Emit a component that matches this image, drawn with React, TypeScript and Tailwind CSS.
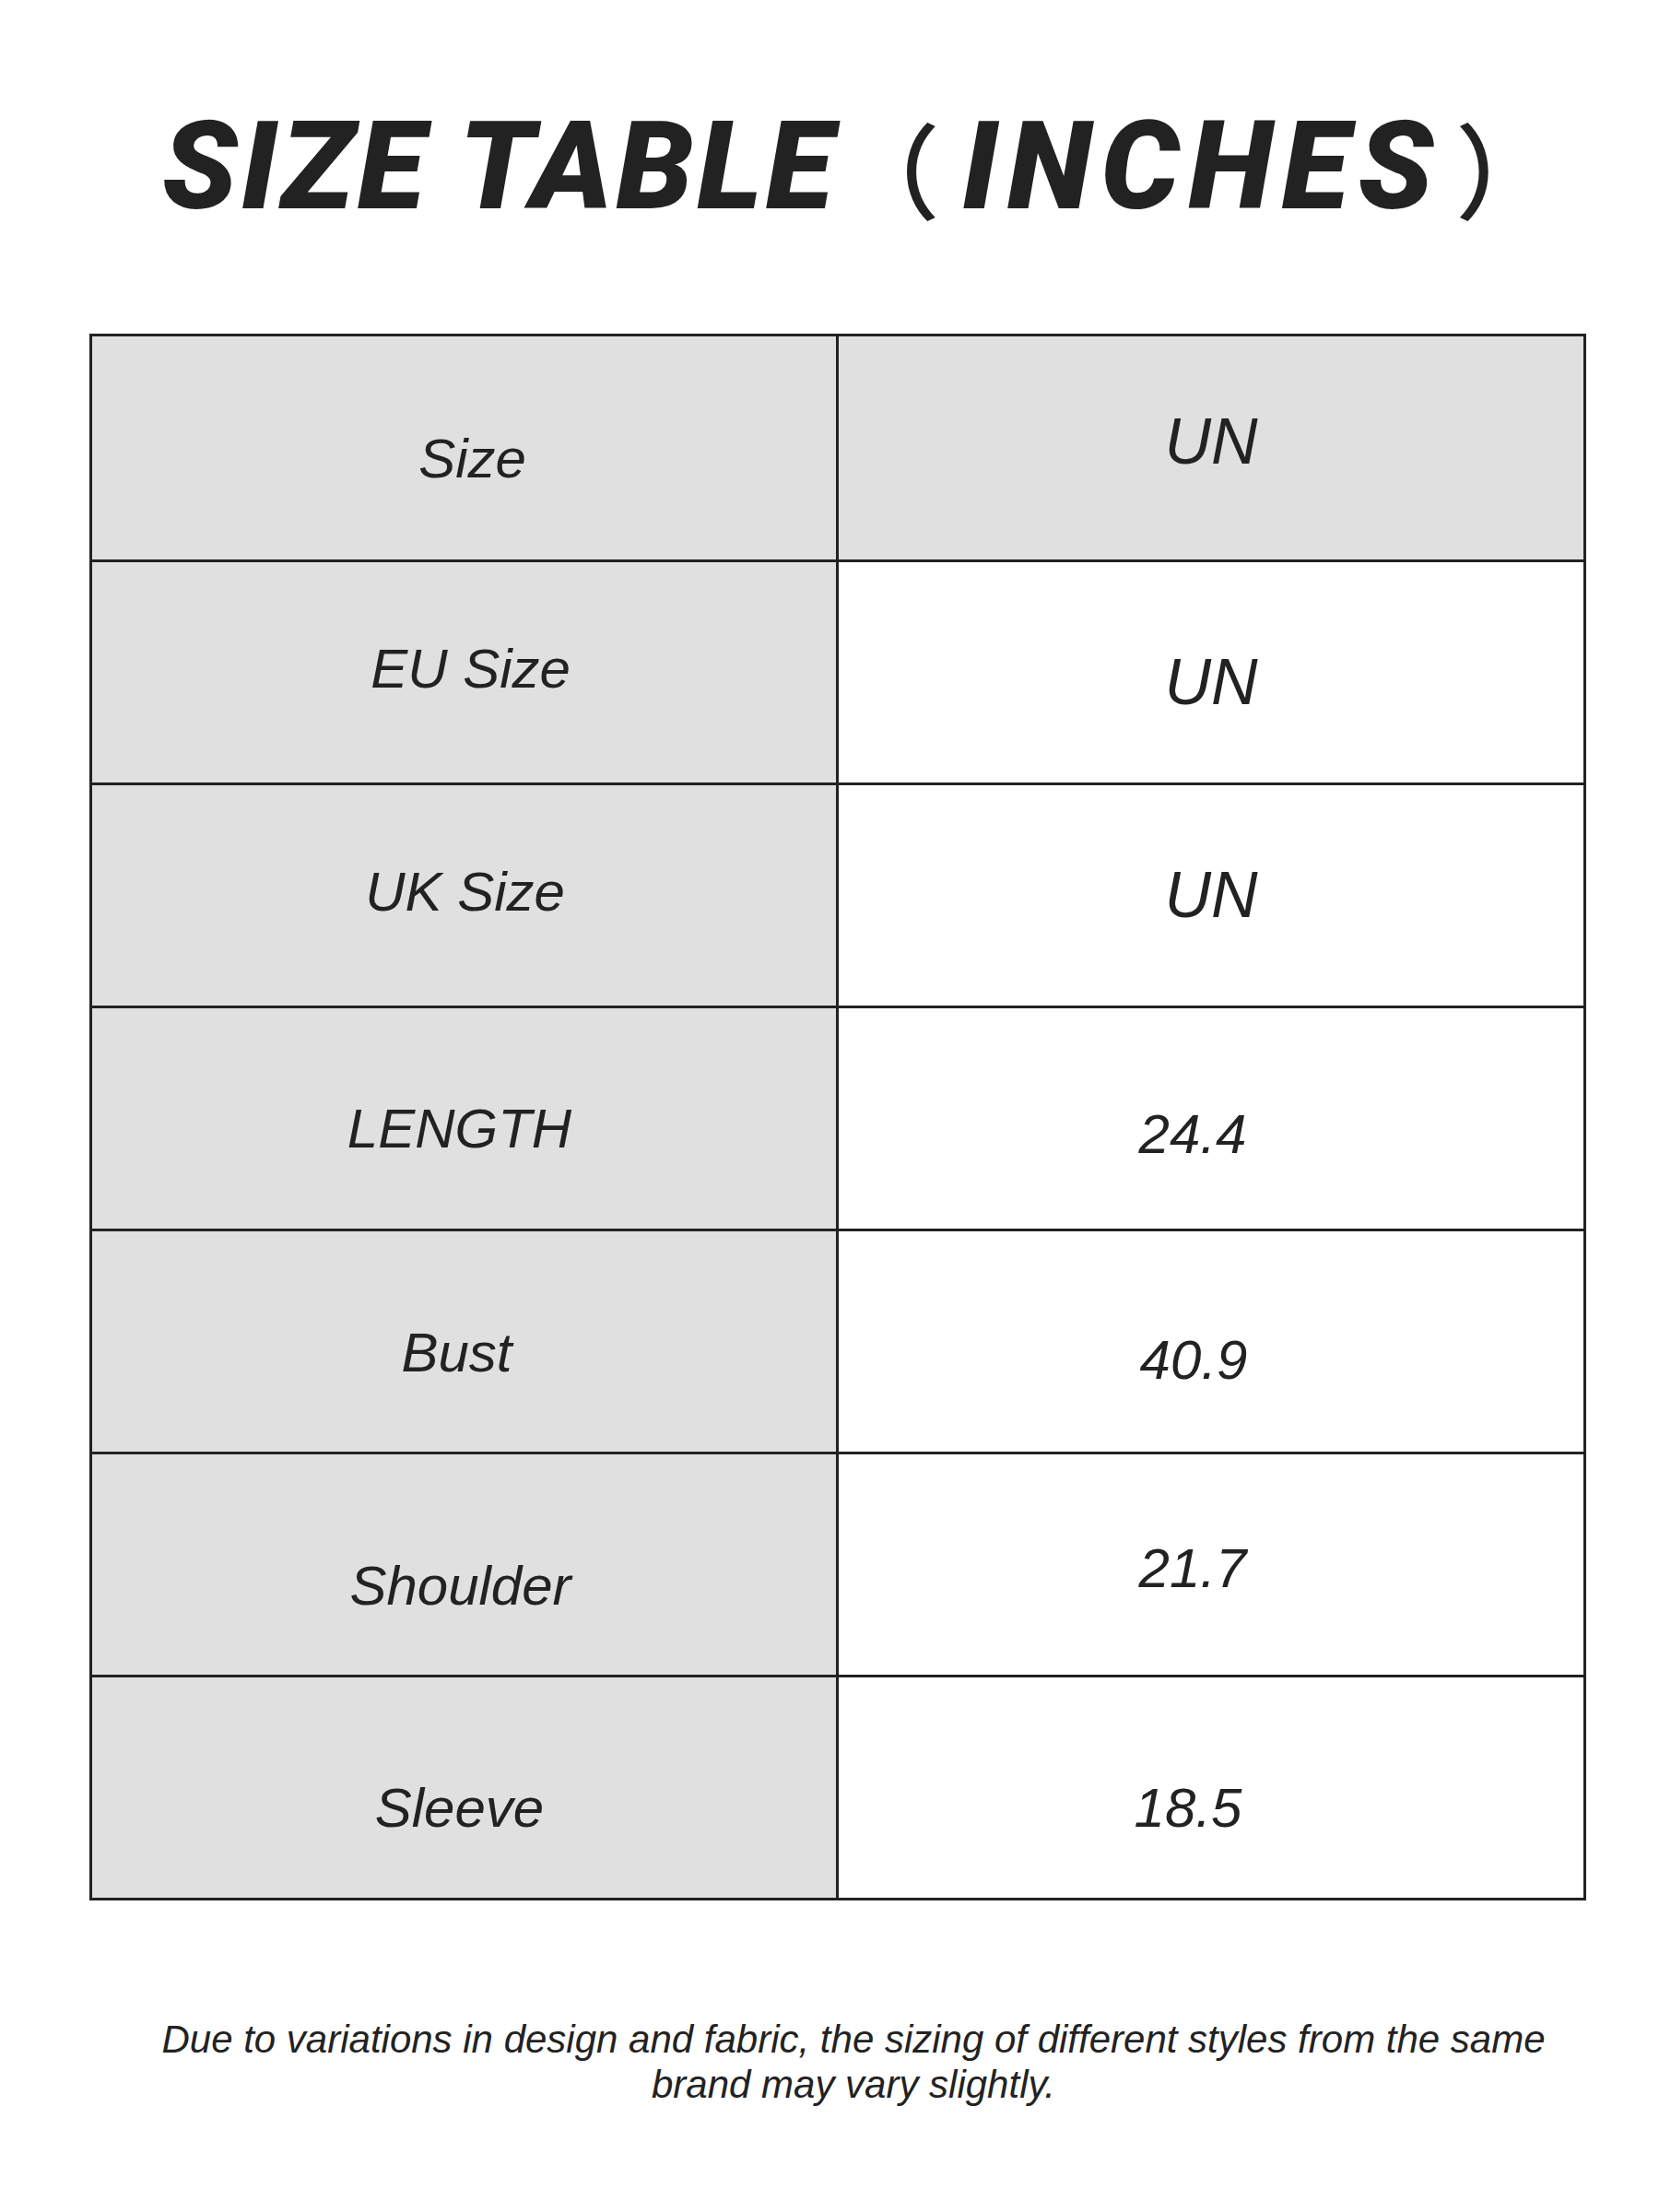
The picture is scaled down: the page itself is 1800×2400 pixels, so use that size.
const rows = [
  { label: "Size", value: "UN", head: true, lp: "pt-[24px] pl-[18px]", vp: "pb-[14px] text-[70px]" },
  { label: "EU Size", value: "UN", lp: "pb-[8px] pl-[14px]", vp: "pt-[22px] text-[70px]" },
  { label: "UK Size", value: "UN", lp: "pb-[8px] pl-[2px]", vp: "pt-[0px] text-[70px]" },
  { label: "LENGTH", value: "24.4", lp: "pt-[22px] pr-[10px]", vp: "pt-[34px] pr-[40px] text-[60px]" },
  { label: "Bust", value: "40.9", lp: "pt-[24px] pr-[16px]", vp: "pt-[40px] pr-[38px] text-[60px]" },
  { label: "Shoulder", value: "21.7", lp: "pt-[46px] pr-[8px]", vp: "pt-[8px] pr-[40px] text-[60px]" },
  { label: "Sleeve", value: "18.5", lp: "pt-[44px] pr-[10px]", vp: "pt-[44px] pr-[50px] text-[60px]" },
];

export default function App() {
  return (
    <div className="w-[1800px] h-[2400px] bg-white text-[#222222] font-['Liberation_Sans',Arial,sans-serif]">
      {/* title */}
      <div className="h-[362px] flex items-center pl-[176px]">
        <h1 className="flex items-center text-[134px] leading-none italic font-black font-['Roboto',sans-serif]">
          <span className="tracking-[4px]">SIZE TABLE</span>
          <span className="font-medium not-italic ml-[0px] mr-[24px] font-['Noto_Sans_CJK_SC',sans-serif] text-[112px]">（</span>
          <span className="tracking-[10px]">INCHES</span>
          <span className="font-medium not-italic ml-[14px] font-['Noto_Sans_CJK_SC',sans-serif] text-[112px]">）</span>
        </h1>
      </div>

      {/* table */}
      <div className="ml-[97px] w-[1624px] border-[3px] border-[#222222]">
        {rows.map((r, i) => (
          <div key={r.label} className={`grid grid-cols-[810px_1fr] h-[242px] ${i > 0 ? "border-t-[3px] border-[#222222]" : ""}`}>
            <div className={`bg-[#e0e0e0] border-r-[3px] border-[#222222] flex items-center justify-center italic text-[60px] ${r.lp}`}>
              {r.label}
            </div>
            <div className={`${r.head ? "bg-[#e0e0e0]" : "bg-white"} flex items-center justify-center italic ${r.vp}`}>
              {r.value}
            </div>
          </div>
        ))}
      </div>

      {/* note */}
      <p className="mt-[126px] pl-[52px] text-center italic text-[42px] leading-[49px] whitespace-nowrap">
        Due to variations in design and fabric, the sizing of different styles from the same
        <br />
        brand may vary slightly.
      </p>
    </div>
  );
}
